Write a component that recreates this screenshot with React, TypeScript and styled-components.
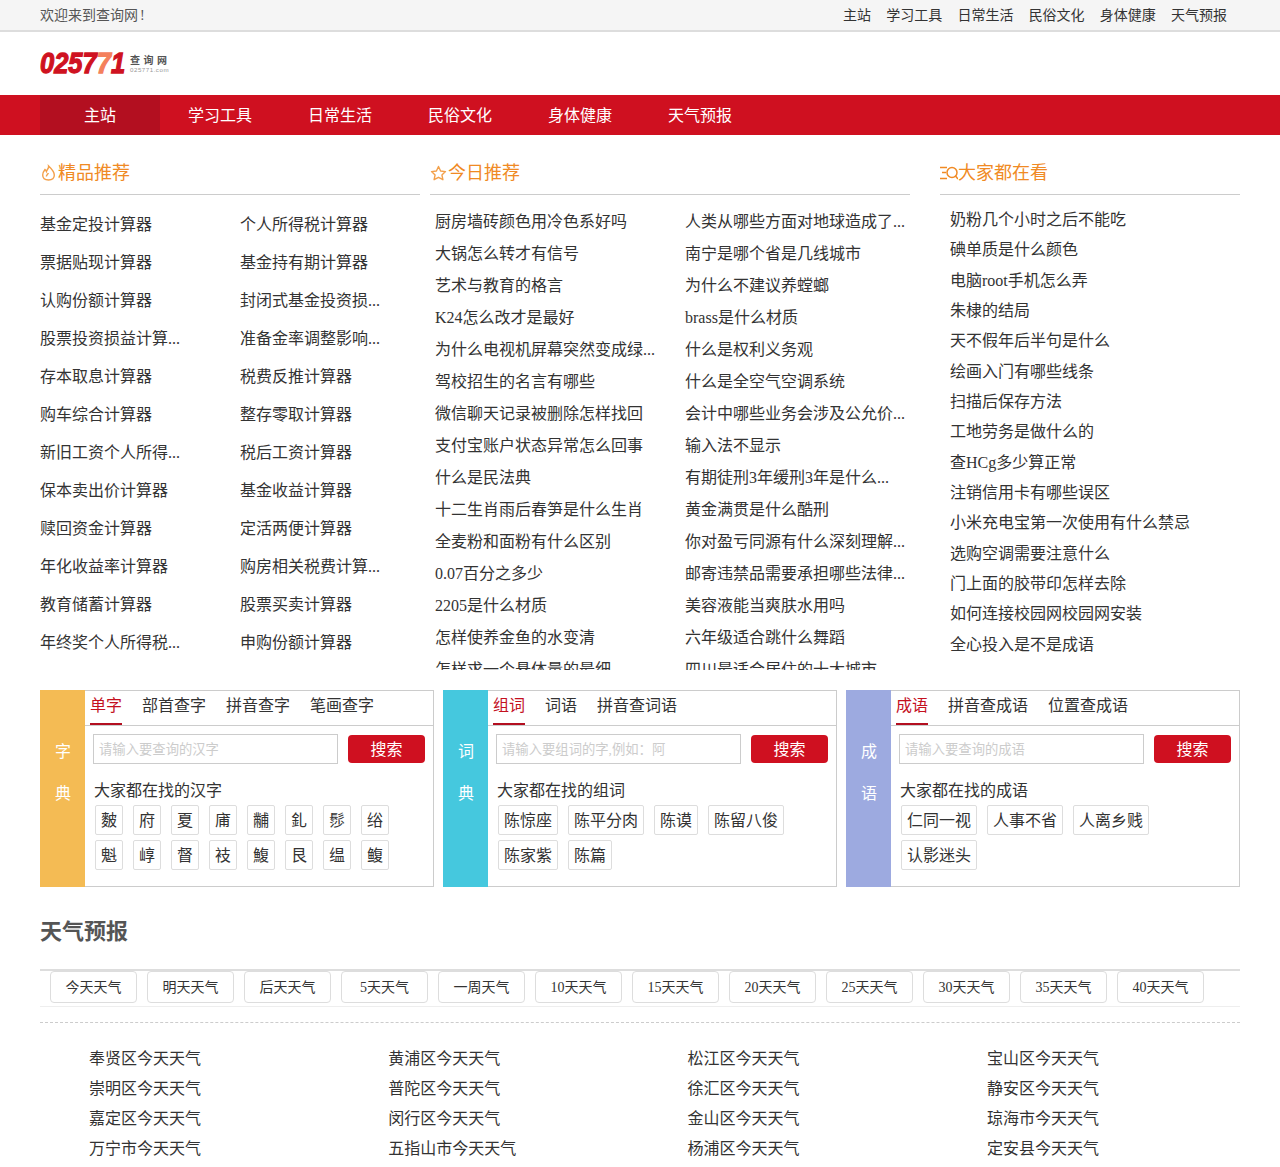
import React from 'react';
import styled, { createGlobalStyle } from 'styled-components';

const Global = createGlobalStyle`
  html, body { margin: 0; padding: 0; background: #fff; }
  body { font-family: "Liberation Serif", "Noto Sans CJK SC", serif; color: #333; width: 1280px; height: 1167px; overflow: hidden; }
  a { color: inherit; text-decoration: none; }
  ul { list-style: none; margin: 0; padding: 0; }
`;

const TopBar = styled.div`
  background: #f5f5f5; border-bottom: 2px solid #ddd;
  display: flex; justify-content: space-between; align-items: center;
  padding: 2px 53px 0 40px; height: 28px; font-size: 14px; line-height: 28px; color: #555;
`;
const Bang = styled.span`margin-left: 2px;`;
const TopLinks = styled.div`display: flex; gap: 15.2px; color: #333;`;

const LogoRow = styled.div`height: 61px; padding: 0 0 2px 40px; display: flex; align-items: center;`;
const LogoMarkBox = styled.div`width: 90px; height: 24px;`;
const LogoMark = styled.div`
  font: italic 900 30px/24px "Liberation Sans", sans-serif; color: #cf1221; width: 100px;
  transform: scaleX(0.85); transform-origin: left; -webkit-text-stroke: 1.3px #cf1221; white-space: nowrap;
  span { color: #f4805c; -webkit-text-stroke-color: #f4805c; }
`;
const LogoText = styled.div`
  display: flex; flex-direction: column; align-items: flex-start;
  font: bold 10px/13px "Noto Sans CJK SC", sans-serif; color: #555; letter-spacing: 3.5px;
  small { font: 6.2px/7px "Liberation Sans", sans-serif; color: #999; letter-spacing: .5px; }
`;

const Nav = styled.nav`height: 40px; background: #cf1020; padding-left: 40px; display: flex;`;
const NavItem = styled.a<{ $active?: boolean }>`
  width: 120px; text-align: center; line-height: 42px; height: 40px; font-size: 16px; color: #fff;
  background: ${p => (p.$active ? '#b30f20' : 'transparent')};
`;

const Recs = styled.div`display: flex; padding: 0 40px; height: 535px; margin-top: 20px;`;
const Column = styled.section<{ $w: number; $ml?: number }>`width: ${p => p.$w}px; margin-left: ${p => p.$ml ?? 0}px; height: 515px; overflow: hidden;`;
const Heading = styled.h3`
  margin: 0; border-bottom: 1px solid #ccc; font-size: 18px; font-weight: normal; color: #f08a24;
  display: flex; align-items: center; line-height: 36px; padding-bottom: 3px; height: 36px;
  svg { flex: none; }
`;
const ToolList = styled.ul`display: grid; grid-template-columns: 200px 140px; grid-auto-rows: 38px; padding-top: 11px;`;
const MidList = styled.ul`display: grid; grid-template-columns: 250px 225px; grid-auto-rows: 32px; padding: 11px 0 0 5px;`;
const HotList = styled.ul`padding: 10px 0 0 10px;`;
const Item = styled.li`font-size: 16px; line-height: 38px; white-space: nowrap;`;
const MidItem = styled(Item)`line-height: 32px;`;
const HotItem = styled(Item)`line-height: 30px; margin-bottom: 0.35px;`;

const Panels = styled.div`display: flex; gap: 9px; padding-left: 40px;`;
const Panel = styled.section`width: 394px; height: 197px; box-sizing: border-box; border: 1px solid #ccc; border-left: 0; display: flex;`;
const Side = styled.div<{ $c: string }>`
  width: 45px; margin: -1px 0; background: ${p => p.$c}; color: #fff; font-size: 16px; line-height: 22px;
  display: flex; flex-direction: column; align-items: center; gap: 20px; padding: 51px 0 0 1px; box-sizing: border-box;
`;
const PanelBody = styled.div`flex: 1; min-width: 0;`;
const Tabs = styled.div`height: 34px; border-bottom: 1px solid #ccc; display: flex; gap: 20px; padding-left: 5px; font-size: 16px;`;
const Tab = styled.a<{ $on?: boolean }>`
  height: 34px; line-height: 30px; color: ${p => (p.$on ? '#c4111f' : '#333')};
  border-bottom: ${p => (p.$on ? '2px solid #b30f20' : '0')}; box-sizing: border-box;
`;
const SearchRow = styled.div`display: flex; align-items: center; padding: 8px 0 0 8px; gap: 10px;`;
const Input = styled.input`
  width: 245px; height: 30px; box-sizing: border-box; border: 1px solid #ccc; padding: 2px 5px 0; font: 13.33px "Liberation Serif", "Noto Sans CJK SC", serif;
  &::placeholder { color: #ccc; opacity: 1; }
`;
const SearchBtn = styled.button`
  width: 77px; height: 28px; border: 0; border-radius: 4px; background: #cf1020; color: #fff; font: 16px "Liberation Serif", "Noto Sans CJK SC", serif; padding: 0 0 2px;
`;
const Found = styled.div`font-size: 16px; line-height: 24px; margin: 15px 0 2px 9px;`;
const Chips = styled.div`display: flex; flex-wrap: wrap; gap: 5px 10px; margin-left: 10px; width: 330px;`;
const Chip = styled.a`
  height: 28px; padding: 0 5px; border: 1px solid #ddd; border-radius: 2px; font-size: 16px; line-height: 30px; text-align: center;
`;

const Weather = styled.section`padding: 0 40px;`;
const WeatherTitle = styled.h2`margin: 0; height: 82px; padding-top: 29px; box-sizing: border-box; font-size: 22px; line-height: 32px; color: #555; font-weight: bold;`;
const DayTabs = styled.div`
  height: 38px; box-sizing: border-box; border-top: 2px solid #ddd; border-bottom: 1px solid #eee;
  display: flex; gap: 10px; padding: 0 0 0 10px;
`;
const DayTab = styled.a`
  width: 87px; height: 32px; box-sizing: border-box; border: 1px solid #ddd; border-radius: 4px; text-align: center; font-size: 14px; line-height: 32px;
`;
const Dashed = styled.div`border-top: 1px dashed #ccc; margin-top: 15px;`;
const Cities = styled.ul`display: grid; grid-template-columns: repeat(4, 299.3px); grid-auto-rows: 30px; padding: 20px 0 0 49px;`;
const City = styled.li`font-size: 16px; line-height: 32px; white-space: nowrap;`;

const Flame = () => (
  <svg width="18" height="18" viewBox="0 0 18 18" fill="none" stroke="#f3a04a" strokeWidth="1.4">
    <path d="M8.6 2 C9 4.5 7 5.5 6.4 7.5 C6 6.5 5.6 6 5 5.5 C3.4 7.5 2.7 9.2 2.7 11 C2.7 14 5 16 8.5 16 C12 16 14.3 14 14.3 11 C14.3 7.8 11.8 5 8.6 2 Z" />
    <path d="M6.4 12.5 C6.4 11 7.8 10.5 8.4 9" />
  </svg>
);
const Star = () => (
  <svg width="18" height="18" viewBox="0 0 18 18" fill="none" stroke="#f3a04a" strokeWidth="1.4" strokeLinejoin="round">
    <path d="M8.5 2.5 L10.6 7 L15.5 7.6 L11.9 10.9 L12.9 15.7 L8.5 13.3 L4.1 15.7 L5.1 10.9 L1.5 7.6 L6.4 7 Z" />
  </svg>
);
const Eye = () => (
  <svg width="18" height="18" viewBox="0 0 18 18" fill="none" stroke="#f08a24" strokeWidth="1.5">
    <path d="M0 3.5 H7 M2 8.5 H6 M0 14.5 H7" />
    <circle cx="12" cy="8.5" r="5" />
    <path d="M15.5 12 L18 15" />
  </svg>
);

const tools = ['基金定投计算器','个人所得税计算器','票据贴现计算器','基金持有期计算器','认购份额计算器','封闭式基金投资损...','股票投资损益计算...','准备金率调整影响...','存本取息计算器','税费反推计算器','购车综合计算器','整存零取计算器','新旧工资个人所得...','税后工资计算器','保本卖出价计算器','基金收益计算器','赎回资金计算器','定活两便计算器','年化收益率计算器','购房相关税费计算...','教育储蓄计算器','股票买卖计算器','年终奖个人所得税...','申购份额计算器'];
const mids = ['厨房墙砖颜色用冷色系好吗','人类从哪些方面对地球造成了...','大锅怎么转才有信号','南宁是哪个省是几线城市','艺术与教育的格言','为什么不建议养螳螂','K24怎么改才是最好','brass是什么材质','为什么电视机屏幕突然变成绿...','什么是权利义务观','驾校招生的名言有哪些','什么是全空气空调系统','微信聊天记录被删除怎样找回','会计中哪些业务会涉及公允价...','支付宝账户状态异常怎么回事','输入法不显示','什么是民法典','有期徒刑3年缓刑3年是什么...','十二生肖雨后春笋是什么生肖','黄金满贯是什么酷刑','全麦粉和面粉有什么区别','你对盈亏同源有什么深刻理解...','0.07百分之多少','邮寄违禁品需要承担哪些法律...','2205是什么材质','美容液能当爽肤水用吗','怎样使养金鱼的水变清','六年级适合跳什么舞蹈','怎样求一个悬体量的最细','四川最适合居住的十大城市'];
const hots = ['奶粉几个小时之后不能吃','碘单质是什么颜色','电脑root手机怎么弄','朱棣的结局','天不假年后半句是什么','绘画入门有哪些线条','扫描后保存方法','工地劳务是做什么的','查HCg多少算正常','注销信用卡有哪些误区','小米充电宝第一次使用有什么禁忌','选购空调需要注意什么','门上面的胶带印怎样去除','如何连接校园网校园网安装','全心投入是不是成语'];
const days = ['今天天气','明天天气','后天天气','5天天气','一周天气','10天天气','15天天气','20天天气','25天天气','30天天气','35天天气','40天天气'];
const cities = ['奉贤区','黄浦区','松江区','宝山区','崇明区','普陀区','徐汇区','静安区','嘉定区','闵行区','金山区','琼海市','万宁市','五指山市','杨浦区','定安县'];

const panels = [
  { side: ['字','典'], c: '#f4bb54', tabs: ['单字','部首查字','拼音查字','笔画查字'], ph: '请输入要查询的汉字', found: '大家都在找的汉字', chips: ['麬','府','夏','庯','黼','釓','髿','绤','魁','崞','督','衼','鰒','艮','缊','鳆'] },
  { side: ['词','典'], c: '#45c8de', tabs: ['组词','词语','拼音查词语'], ph: '请输入要组词的字,例如\uFF1A阿', found: '大家都在找的组词', chips: ['陈惊座','陈平分肉','陈谟','陈留八俊','陈家紫','陈篇'] },
  { side: ['成','语'], c: '#9daae0', tabs: ['成语','拼音查成语','位置查成语'], ph: '请输入要查询的成语', found: '大家都在找的成语', chips: ['仁同一视','人事不省','人离乡贱','认影迷头'] },
];

export default function App() {
  return (
    <>
      <Global />
      <TopBar>
        <span>欢迎来到查询网<Bang>!</Bang></span>
        <TopLinks>{['主站','学习工具','日常生活','民俗文化','身体健康','天气预报'].map(t => <a key={t} href="#">{t}</a>)}</TopLinks>
      </TopBar>
      <LogoRow>
        <LogoMarkBox><LogoMark>0257<span>7</span>1</LogoMark></LogoMarkBox>
        <LogoText>查询网<small>025771.com</small></LogoText>
      </LogoRow>
      <Nav>
        {['主站','学习工具','日常生活','民俗文化','身体健康','天气预报'].map((t, i) => <NavItem key={t} href="#" $active={i === 0}>{t}</NavItem>)}
      </Nav>
      <Recs>
        <Column $w={380}>
          <Heading><Flame />精品推荐</Heading>
          <ToolList>{tools.map(t => <Item key={t}>{t}</Item>)}</ToolList>
        </Column>
        <Column $w={480} $ml={10}>
          <Heading><Star />今日推荐</Heading>
          <MidList>{mids.map(t => <MidItem key={t}>{t}</MidItem>)}</MidList>
        </Column>
        <Column $w={300} $ml={30}>
          <Heading><Eye />大家都在看</Heading>
          <HotList>{hots.map(t => <HotItem key={t}>{t}</HotItem>)}</HotList>
        </Column>
      </Recs>
      <Panels>
        {panels.map(p => (
          <Panel key={p.found}>
            <Side $c={p.c}>{p.side.map(s => <span key={s}>{s}</span>)}</Side>
            <PanelBody>
              <Tabs>{p.tabs.map((t, i) => <Tab key={t} $on={i === 0}>{t}</Tab>)}</Tabs>
              <SearchRow><Input placeholder={p.ph} readOnly /><SearchBtn>搜索</SearchBtn></SearchRow>
              <Found>{p.found}</Found>
              <Chips>{p.chips.map(c => <Chip key={c}>{c}</Chip>)}</Chips>
            </PanelBody>
          </Panel>
        ))}
      </Panels>
      <Weather>
        <WeatherTitle>天气预报</WeatherTitle>
        <DayTabs>{days.map(d => <DayTab key={d}>{d}</DayTab>)}</DayTabs>
        <Dashed />
        <Cities>{cities.map(c => <City key={c}>{c}今天天气</City>)}</Cities>
      </Weather>
    </>
  );
}
